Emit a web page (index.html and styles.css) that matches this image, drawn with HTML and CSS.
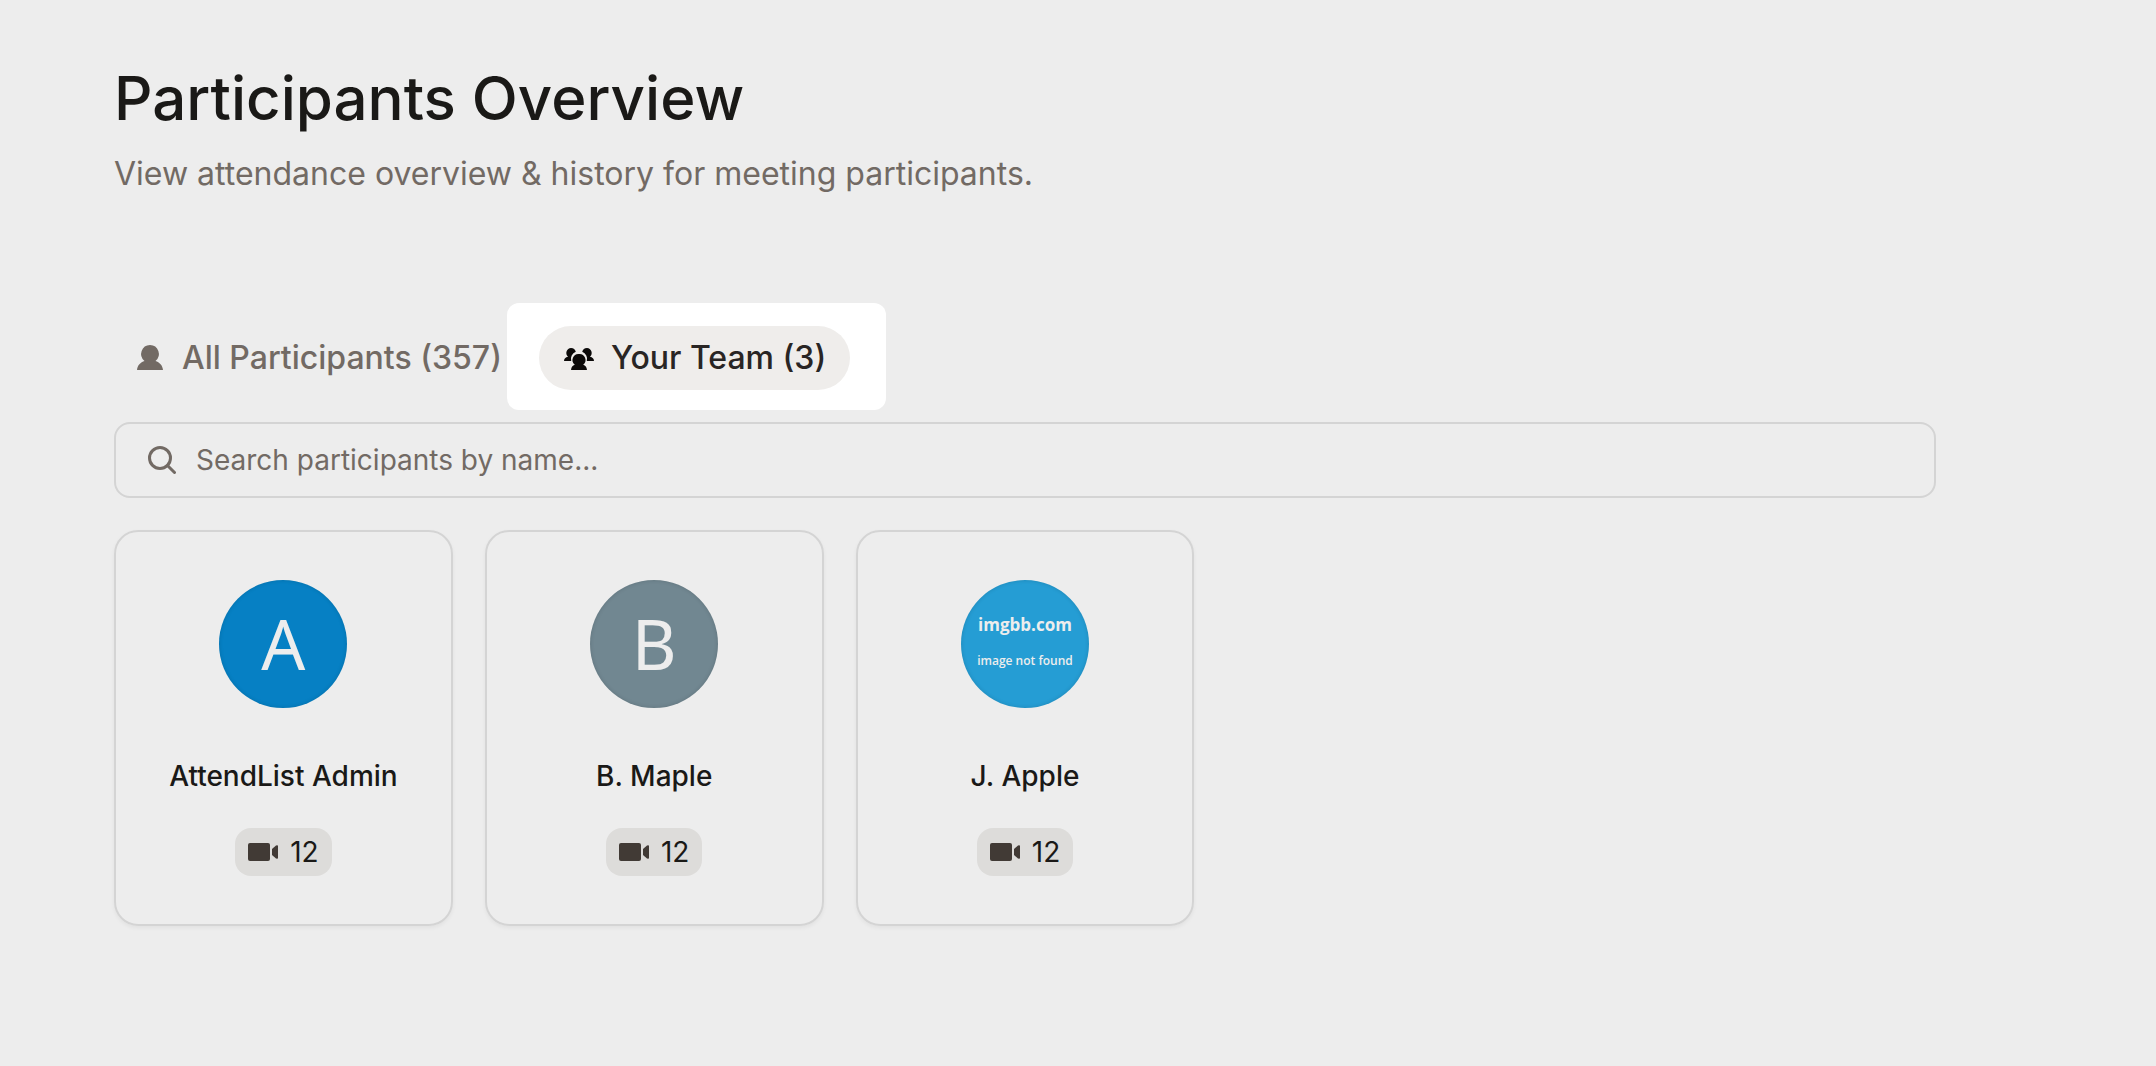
FILE: index.html
```html
<!DOCTYPE html>
<html lang="en">
<head>
  <meta charset="UTF-8">
  <meta name="viewport" content="width=device-width, initial-scale=1.0">
  <title>Participants Overview</title>
  <link rel="stylesheet" href="styles.css">
</head>
<body>
<main class="page">
  <header class="page-header">
    <h1>Participants Overview</h1>
    <p>View attendance overview &amp; history for meeting participants.</p>
  </header>

  <nav class="tabs" aria-label="Participant groups">
    <button type="button" class="tab">
      <svg class="tab-icon" viewBox="0 0 32 32" aria-hidden="true">
        <path d="M16 3a9 9 0 0 1 5.500 16C25.500 20.500 28.500 23 29 28H3c.5-5 3.500-7.500 7.500-9A9 9 0 0 1 16 3z"/>
      </svg>
      All Participants (357)
    </button>
    <div class="tab-highlight">
      <button type="button" class="tab active" aria-current="true">
        <svg class="tab-icon" viewBox="0 0 32 32" aria-hidden="true">
          <path d="M8 6a5 5 0 0 1 4.800 3.800A7.500 7.500 0 0 0 8.200 18.900H1c.2-2.400 1.400-3.600 4-4.200A5 5 0 0 1 8 6z"/>
          <path d="M24 6a5 5 0 0 0-4.800 3.800A7.500 7.500 0 0 1 23.800 18.900H31c-.2-2.400-1.400-3.600-4-4.200A5 5 0 0 0 24 6z"/>
          <path d="M16 12a6 6 0 0 1 4.200 10.700c2.200.8 3.500 2.200 3.800 5.300H8c.3-3.100 1.600-4.500 3.800-5.300A6 6 0 0 1 16 12z"/>
        </svg>
        Your Team (3)
      </button>
    </div>
  </nav>

  <label class="search">
    <svg class="search-icon" viewBox="0 0 28 28" aria-hidden="true">
      <circle cx="12" cy="12" r="10.500"/>
      <path d="M19.500 19.500l7 7"/>
    </svg>
    <input type="text" placeholder="Search participants by name..." aria-label="Search participants by name">
  </label>

  <section class="cards">
    <article class="card">
      <div class="avatar avatar-blue">A</div>
      <h2>AttendList Admin</h2>
      <span class="badge">
        <svg class="video-icon" viewBox="0 0 30 18" aria-hidden="true"><rect width="22" height="18" rx="2"/><path d="M24 6l4-3.500Q30 2 30 3v12q0 1-2 .5L24 12z"/></svg>
        12
      </span>
    </article>
    <article class="card">
      <div class="avatar avatar-grey">B</div>
      <h2>B. Maple</h2>
      <span class="badge">
        <svg class="video-icon" viewBox="0 0 30 18" aria-hidden="true"><rect width="22" height="18" rx="2"/><path d="M24 6l4-3.500Q30 2 30 3v12q0 1-2 .5L24 12z"/></svg>
        12
      </span>
    </article>
    <article class="card">
      <div class="avatar avatar-missing">
        <strong>imgbb.com</strong>
        <small>image not found</small>
      </div>
      <h2>J. Apple</h2>
      <span class="badge">
        <svg class="video-icon" viewBox="0 0 30 18" aria-hidden="true"><rect width="22" height="18" rx="2"/><path d="M24 6l4-3.500Q30 2 30 3v12q0 1-2 .5L24 12z"/></svg>
        12
      </span>
    </article>
  </section>
</main>
</body>
</html>
```
FILE: styles.css
```css
* { box-sizing: border-box; }
body {
    margin: 0;
    background-color: #ededed;
    color: #1a1917;
    font-family: Inter, sans-serif;
}
h1, h2, p { margin: 0; }
.page { padding: 64px 220px 64px 114px; }

.page-header h1 {
    font-size: 60px;
    line-height: 68px;
    font-weight: 500;
}
.page-header p {
    margin-top: 16px;
    font-size: 32px;
    line-height: 52px;
    color: #726a64;
}

/* Tabs */
.tabs {
    display: flex;
    align-items: baseline;
    gap: 5px;
    margin-top: 103px;
}
.tab {
    display: flex;
    align-items: center;
    gap: 16px;
    height: 64px;
    padding: 0 0 0 20px;
    border: none;
    border-radius: 32px;
    background: none;
    color: #726a64;
    font: 500 32px/40px Inter, sans-serif;
    white-space: nowrap;
    cursor: pointer;
}
.tab-icon { width: 32px; height: 32px; fill: currentColor; }
.tab-highlight {
    padding: 23px 36px 20px 32px;
    border-radius: 12px;
    background-color: #fff;
}
.tab.active {
    padding: 0 24px;
    background-color: #efedeb;
    color: #292524;
}
.tab.active .tab-icon { fill: #0c0a09; }

/* Search */
.search {
    display: flex;
    align-items: center;
    gap: 20px;
    height: 76px;
    margin-top: 12px;
    padding: 0 32px;
    border: 2px solid #d4d4d4;
    border-radius: 16px;
}
.search-icon {
    width: 28px;
    height: 28px;
    fill: none;
    stroke: #726a64;
    stroke-width: 3;
    stroke-linecap: round;
}
.search input {
    flex: 1;
    padding: 0;
    border: none;
    outline: none;
    background: none;
    color: #1a1917;
    font: 400 28px/40px Inter, sans-serif;
}
.search input::placeholder { color: #726a64; opacity: 1; }

/* Cards */
.cards {
    display: grid;
    grid-template-columns: repeat(5, 1fr);
    gap: 32px;
    margin-top: 32px;
}
.card {
    display: flex;
    flex-direction: column;
    align-items: center;
    padding: 48px 24px;
    border: 2px solid #d4d4d4;
    border-radius: 24px;
    box-shadow: 0 2px 4px rgba(0, 0, 0, 0.05);
}
.card h2 {
    margin: 48px 0 32px;
    font-size: 28px;
    line-height: 40px;
    font-weight: 500;
}
.avatar {
    display: flex;
    flex-direction: column;
    align-items: center;
    justify-content: center;
    width: 128px;
    height: 128px;
    padding-bottom: 2px;
    border-radius: 50%;
    box-shadow: inset 0 0 4px rgba(0, 0, 0, 0.15);
    color: #ededed;
    font: 400 69px/80px "Noto Sans", sans-serif;
}
.avatar-blue { background-color: #0680c4; }
.avatar-grey { background-color: #718791; }
.avatar-missing {
    gap: 12px;
    background-color: #259dd4;
    font-family: "Open Sans", sans-serif;
}
.avatar-missing strong { font-size: 17px; line-height: 24px; font-weight: 700; }
.avatar-missing small { font-size: 12px; line-height: 24px; font-weight: 600; }

.badge {
    display: flex;
    align-items: center;
    gap: 12px;
    height: 48px;
    padding: 0 13px;
    border-radius: 16px;
    background-color: #dddcda;
    font-size: 28px;
    line-height: 40px;
}
.video-icon { width: 30px; height: 18px; fill: #413a35; }
```
